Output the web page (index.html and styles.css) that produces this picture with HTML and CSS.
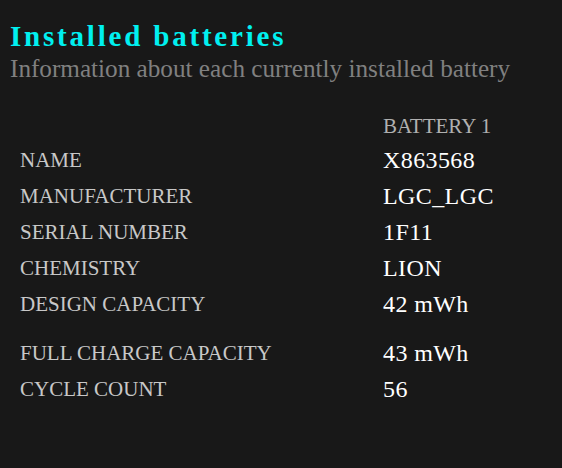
FILE: index.html
```html
<!DOCTYPE html>
<html>
<head>
<meta charset="utf-8">
<link rel="stylesheet" href="styles.css">
</head>
<body>
<h2 class="title">Installed batteries</h2>
<div class="subtitle">Information about each currently installed battery</div>
<table class="batteries">
  <thead>
    <tr><td></td><td class="colhead">BATTERY 1</td></tr>
  </thead>
  <tbody>
    <tr><td class="label">NAME</td><td class="value">X863568</td></tr>
    <tr><td class="label">MANUFACTURER</td><td class="value">LGC_LGC</td></tr>
    <tr><td class="label">SERIAL NUMBER</td><td class="value">1F11</td></tr>
    <tr><td class="label">CHEMISTRY</td><td class="value">LION</td></tr>
    <tr><td class="label">DESIGN CAPACITY</td><td class="value">42 mWh</td></tr>
    <tr class="spacer"><td colspan="2"></td></tr>
    <tr><td class="label">FULL CHARGE CAPACITY</td><td class="value">43 mWh</td></tr>
    <tr><td class="label">CYCLE COUNT</td><td class="value">56</td></tr>
  </tbody>
</table>
</body>
</html>
```
FILE: styles.css
```css
html, body {
  margin: 0;
  background: #181818;
}
body {
  padding: 18px 10px;
  font-family: "Liberation Serif", "Times New Roman", serif;
  color: #f0f0f0;
}
.title {
  margin: 0;
  font-size: 29px;
  font-weight: bold;
  letter-spacing: 2.8px;
  color: #00f0f0;
  line-height: 36px;
}
.subtitle {
  font-size: 25.2px;
  color: #808080;
  line-height: 30px;
}
.batteries {
  margin-top: 22px;
  border-collapse: collapse;
}
.batteries td {
  padding: 0 0 0 10px;
  height: 36px;
}
.batteries .colhead {
  font-size: 21px;
  color: #b0b0b0;
  height: 23px;
  padding-bottom: 3px;
  vertical-align: bottom;
}
.label {
  font-size: 21px;
  color: #c8c8c8;
  width: 353px;
}
.value {
  font-size: 24px;
  letter-spacing: 0.4px;
  color: #ffffff;
}
.batteries .spacer td {
  height: 13px;
}
```
